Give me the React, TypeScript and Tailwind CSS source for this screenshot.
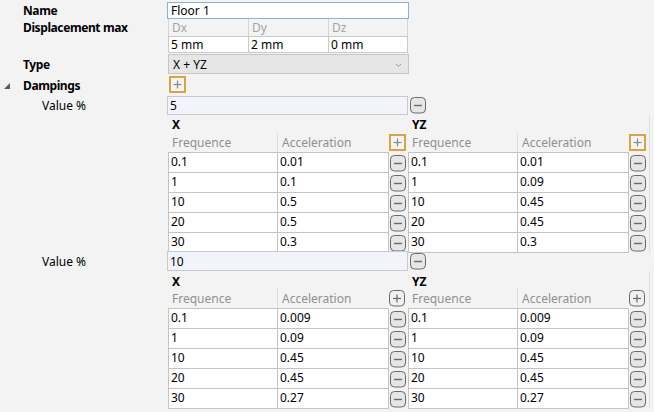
import React from "react";

const FONT = "font-['Noto_Sans','Open_Sans',sans-serif]";

function MinusBtn() {
  return (
    <svg width="17" height="17" viewBox="0 0 17 17" className="block">
      <rect x="0.5" y="0.5" width="15" height="15.5" rx="4" fill="#e6e6e6" stroke="#6a6a6a" />
      <line x1="4" y1="8.5" x2="12" y2="8.5" stroke="#6a6a6a" strokeWidth="1.4" />
    </svg>
  );
}

function PlusBtn() {
  return (
    <svg width="17" height="17" viewBox="0 0 17 17" className="block">
      <rect x="0.5" y="0.5" width="15" height="15.5" rx="4" fill="#f0f0f0" stroke="#6a6a6a" />
      <line x1="4" y1="8.5" x2="12" y2="8.5" stroke="#6a6a6a" strokeWidth="1.2" />
      <line x1="8" y1="4.5" x2="8" y2="12.5" stroke="#6a6a6a" strokeWidth="1.2" />
    </svg>
  );
}

function OrangePlus() {
  return (
    <svg width="17" height="17" viewBox="0 0 17 17" className="block">
      <rect x="1" y="1" width="15" height="15" fill="#f7f7f7" stroke="#dca43e" strokeWidth="2" />
      <line x1="4.5" y1="8.5" x2="12.5" y2="8.5" stroke="#8c8c8c" strokeWidth="1.3" />
      <line x1="8.5" y1="4.5" x2="8.5" y2="12.5" stroke="#8c8c8c" strokeWidth="1.3" />
    </svg>
  );
}

type Row = [string, string];

function Table({
  title,
  rows,
  highlight,
  titleCls,
  headH,
  headPad,
}: {
  title: string;
  rows: Row[];
  highlight: boolean;
  titleCls: string;
  headH: string;
  headPad: string;
}) {
  return (
    <div className="w-[240px] flex flex-col">
      <div className={`${titleCls} pl-[4px] font-bold flex items-center`}>{title}</div>
      <div className={`${headH} flex`}>
        <div className={`w-[109px] text-[#8f8f8f] pl-[4px] flex items-center ${headPad}`}>Frequence</div>
        <div className={`w-[111px] border-l border-[#dcdcdc] text-[#8f8f8f] pl-[4px] flex items-center ${headPad}`}>
          Acceleration
        </div>
        <div className="ml-[1px] flex items-end pb-[1px]">
          {highlight ? <OrangePlus /> : <PlusBtn />}
        </div>
      </div>
      {rows.map((r, i) => (
        <div key={i} className="h-[20px] flex">
          <div
            className={`w-[109px] border-l border-t border-[#c4c4c4] bg-white pl-[2px] leading-[17px] ${
              i === rows.length - 1 ? "border-b h-[21px]" : "h-[20px]"
            }`}
          >
            {r[0]}
          </div>
          <div
            className={`w-[112px] border-l border-t border-r border-[#c4c4c4] bg-white pl-[2px] leading-[17px] ${
              i === rows.length - 1 ? "border-b h-[21px]" : "h-[20px]"
            }`}
          >
            {r[1]}
          </div>
          <div className="ml-[1px] flex items-center pt-[2px]">
            <MinusBtn />
          </div>
        </div>
      ))}
    </div>
  );
}

function Section({
  value,
  x,
  yz,
  highlight,
  inputH,
  titleCls,
  headH,
  headPad,
  extra,
}: {
  value: string;
  x: Row[];
  yz: Row[];
  highlight: boolean;
  inputH: string;
  titleCls: string;
  headH: string;
  headPad: string;
  extra: string;
}) {
  return (
    <div className={`flex flex-col ${extra}`}>
      <div className="flex items-center">
        <div className="w-[167px] pl-[42px] pt-[2px]">Value %</div>
        <div className={`w-[241px] ${inputH} border border-[#c9c9c9] bg-[#f3f4fb] pl-[2px] pt-[2px] flex items-center`}>
          {value}
        </div>
        <div className="ml-[2px]">
          <MinusBtn />
        </div>
      </div>
      <div className="flex pl-[168px]">
        <Table title="X" rows={x} highlight={highlight} titleCls={titleCls} headH={headH} headPad={headPad} />
        <div className="border-r border-[#dedede] pr-[1px]">
          <Table title="YZ" rows={yz} highlight={highlight} titleCls={titleCls} headH={headH} headPad={headPad} />
        </div>
      </div>
    </div>
  );
}

export default function App() {
  return (
    <div className={`w-[654px] h-[412px] bg-[#f3f3f3] overflow-hidden text-[12px] text-black ${FONT}`}>
      <div className="pt-[2px] flex flex-col">
        {/* Name */}
        <div className="flex items-center h-[17px]">
          <div className="w-[167px] pl-[23px] font-bold tracking-[-0.4px] pt-[1px]">Name</div>
          <div className="w-[242px] h-[17px] border border-[#86b2de] bg-white pl-[3px] pt-[1px] flex items-center">
            Floor 1
          </div>
        </div>
        {/* Displacement */}
        <div className="flex">
          <div className="w-[168px] pl-[23px] font-bold tracking-[-0.4px] h-[17px] pt-[1px] flex items-center">
            Displacement max
          </div>
          <div className="w-[241px] flex flex-col">
            <div className="flex h-[17px]">
              {["Dx", "Dy", "Dz"].map((d, i) => (
                <div
                  key={d}
                  className={`w-[80px] border-l border-[#d4d4d4] ${
                    i === 2 ? "border-r" : ""
                  } text-[#a3a3a3] pl-[3px] flex items-center`}
                >
                  {d}
                </div>
              ))}
            </div>
            <div className="flex h-[17px]">
              {["5 mm", "2 mm", "0 mm"].map((d, i) => (
                <div
                  key={d}
                  className={`w-[80px] border-l border-t border-b border-[#c9c9c9] ${
                    i === 2 ? "border-r" : ""
                  } bg-white pl-[2px] flex items-center`}
                >
                  {d}
                </div>
              ))}
            </div>
          </div>
        </div>
        {/* Type */}
        <div className="flex items-center mt-[1px]">
          <div className="w-[168px] pl-[23px] font-bold tracking-[-0.4px] pt-[2px]">Type</div>
          <div className="w-[241px] h-[20px] border border-[#c6c6c6] bg-[#e6e6e6] pl-[4px] pr-[6px] pt-[2px] flex items-center justify-between">
            <span>X + YZ</span>
            <svg width="7" height="5" viewBox="0 0 7 5">
              <path d="M1 1 L3.5 3.5 L6 1" fill="none" stroke="#9a9a9a" strokeWidth="1" />
            </svg>
          </div>
        </div>
        {/* Dampings */}
        <div className="flex items-center mt-[2px] h-[17px]">
          <div className="w-[168px] flex items-center pt-[2px]">
            <svg width="7" height="7" viewBox="0 0 7 7" className="ml-[4px] mt-[1px]">
              <polygon points="6,0 6,6 0,6" fill="#5a5a5a" />
            </svg>
            <span className="ml-[12px] font-bold tracking-[-0.4px]">Dampings</span>
          </div>
          <div className="ml-[1px]">
            <OrangePlus />
          </div>
        </div>
        <Section
          value="5"
          extra="mt-[2px]"
          highlight={true}
          inputH="h-[19px]"
          titleCls="h-[18px] pt-[1px]"
          headH="h-[19px]"
          headPad=""
          x={[
            ["0.1", "0.01"],
            ["1", "0.1"],
            ["10", "0.5"],
            ["20", "0.5"],
            ["30", "0.3"],
          ]}
          yz={[
            ["0.1", "0.01"],
            ["1", "0.09"],
            ["10", "0.45"],
            ["20", "0.45"],
            ["30", "0.3"],
          ]}
        />
        <Section
          value="10"
          extra="-mt-[1px]"
          highlight={false}
          inputH="h-[20px]"
          titleCls="h-[17px] pt-[5px]"
          headH="h-[20px]"
          headPad="pt-[1px]"
          x={[
            ["0.1", "0.009"],
            ["1", "0.09"],
            ["10", "0.45"],
            ["20", "0.45"],
            ["30", "0.27"],
          ]}
          yz={[
            ["0.1", "0.009"],
            ["1", "0.09"],
            ["10", "0.45"],
            ["20", "0.45"],
            ["30", "0.27"],
          ]}
        />
      </div>
    </div>
  );
}
